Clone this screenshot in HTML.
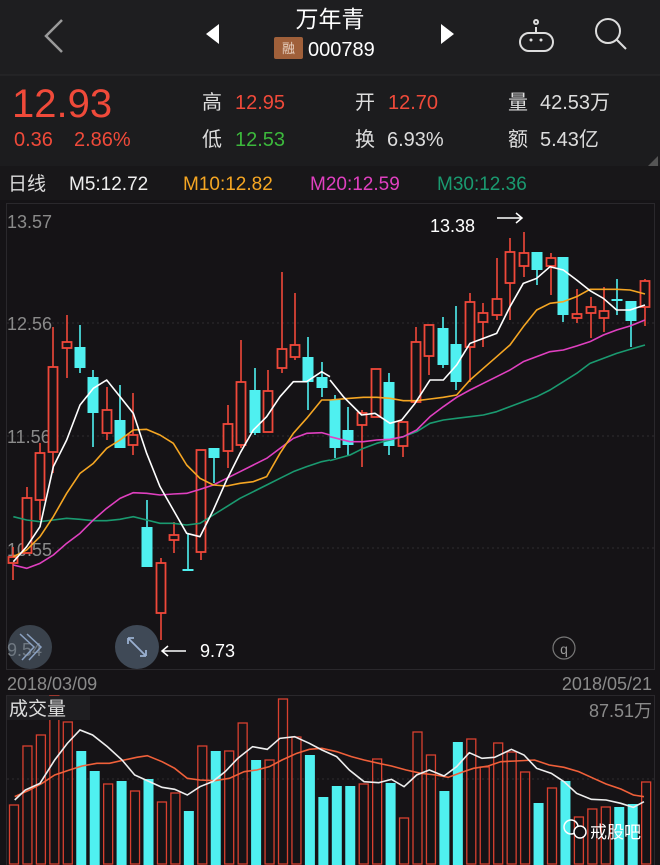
<!DOCTYPE html>
<html><head><meta charset="utf-8"><style>
body{margin:0;width:660px;height:865px;background:#151316;overflow:hidden;font-family:"Liberation Sans","Noto Sans CJK SC",sans-serif;}
svg{display:block}
</style></head><body>
<svg width="660" height="865" xmlns="http://www.w3.org/2000/svg" font-family="Liberation Sans, Noto Sans CJK SC, sans-serif">
<rect x="0" y="0" width="660" height="200" fill="#1c1c1e"/>
<rect x="0" y="0" width="660" height="75" fill="#1e1e20"/>
<line x1="0" y1="75" x2="660" y2="75" stroke="#2a2a2c"/>
<rect x="0" y="166" width="660" height="34" fill="#181719"/>
<!-- header -->
<path d="M62 20 L46 36 L62 52" fill="none" stroke="#9a9a9a" stroke-width="2.5"/>
<path d="M219 24 L206 34 L219 44Z" fill="#fff"/>
<path d="M441 24 L454 34 L441 44Z" fill="#fff"/>
<text x="330" y="27" font-size="23" fill="#fff" text-anchor="middle">万年青</text>
<rect x="274" y="37" width="29" height="22" rx="2" fill="#a0603a"/>
<text x="288.5" y="53" font-size="13" fill="#e8d0c0" text-anchor="middle">融</text>
<text x="308" y="56" font-size="20" fill="#fff">000789</text>
<g fill="none" stroke="#ddd" stroke-width="2"><rect x="520" y="33" width="33" height="18" rx="9"/><path d="M536 33 V27 M536 24 a2 2 0 1 1 0.1 0"/></g>
<circle cx="531" cy="40" r="1.5" fill="#ddd"/><circle cx="541" cy="40" r="1.5" fill="#ddd"/>
<circle cx="608" cy="31" r="12" fill="none" stroke="#ddd" stroke-width="2"/><path d="M617 40 L626 49" stroke="#ddd" stroke-width="2"/>
<!-- info -->
<text x="12" y="117" font-size="40" fill="#f04a3a">12.93</text>
<text x="14" y="146" font-size="20" fill="#f04a3a">0.36</text>
<text x="74" y="146" font-size="20" fill="#f04a3a">2.86%</text>
<g font-size="20"><text x="202" y="109" fill="#ddd">高</text><text x="235" y="109" fill="#f04a3a">12.95</text>
<text x="202" y="146" fill="#ddd">低</text><text x="235" y="146" fill="#3cb83c">12.53</text>
<text x="355" y="109" fill="#ddd">开</text><text x="388" y="109" fill="#f04a3a">12.70</text>
<text x="355" y="146" fill="#ddd">换</text><text x="387" y="146" fill="#ddd">6.93%</text>
<text x="508" y="109" fill="#ddd">量</text><text x="540" y="109" fill="#ddd">42.53万</text>
<text x="508" y="146" fill="#ddd">额</text><text x="540" y="146" fill="#ddd">5.43亿</text></g>
<path d="M658 156 L648 166 L658 166Z" fill="#555"/>
<g font-size="19"><text x="8" y="190" fill="#ddd">日线</text><text x="69" y="190" fill="#eee">M5:12.72</text>
<text x="183" y="190" fill="#f5a623">M10:12.82</text><text x="310" y="190" fill="#e040c0">M20:12.59</text><text x="437" y="190" fill="#1a9a70">M30:12.36</text></g>
<!-- chart frame -->
<rect x="6.5" y="203.5" width="648" height="466" fill="none" stroke="#2a282c"/>
<g stroke="#2e2c30" stroke-dasharray="2 3"><line x1="7" y1="323" x2="654" y2="323"/><line x1="7" y1="436" x2="654" y2="436"/><line x1="7" y1="548" x2="654" y2="548"/></g>
<g font-size="18" fill="#8a8a8a"><text x="7" y="228">13.57</text><text x="7" y="330">12.56</text><text x="7" y="443">11.56</text><text x="7" y="556">10.55</text><text x="7" y="656">9.54</text></g>
<!-- candles -->
<g stroke-width="2" id="c"></g>
<g fill="none" stroke-width="1.6" stroke-linejoin="round">
<g transform="translate(0,200) scale(0.33333)">
<polyline vector-effect="non-scaling-stroke" stroke="#1a9a70" points="40,950 80,960 120,965 160,960 200,955 240,958 280,962 320,962 360,958 400,950 440,960 480,970 520,970 560,975 600,970 640,945 680,920 720,895 760,875 800,855 840,835 880,815 920,800 965,785 990,780"/>
<polyline vector-effect="non-scaling-stroke" stroke="#e040c0" points="40,1095 80,1105 120,1090 160,1065 200,1030 240,1000 280,960 320,925 360,895 400,878 440,880 480,885 520,882 560,880 600,868 640,855 680,835 720,815 760,795 800,775 840,745 880,715 920,700 965,698 990,705"/>
<polyline vector-effect="non-scaling-stroke" stroke="#f5a623" points="40,1070 80,1050 120,1010 160,950 200,880 240,820 280,790 320,745 360,720 400,690 440,688 480,705 520,730 560,795 600,835 640,855 680,858 720,850 760,845 800,830 840,760 880,700 920,655 965,600 990,600"/>
<polyline vector-effect="non-scaling-stroke" stroke="#fff" points="40,1085 80,1040 120,980 160,800 200,720 240,615 280,565 320,540 360,590 400,640 440,760 480,860 520,930 560,1000 600,1010 640,930 680,840 720,760 760,690 800,650 840,590 880,545 920,545 965,515 990,530"/>
</g>
<g transform="translate(330,200) scale(0.33333)">
<polyline vector-effect="non-scaling-stroke" stroke="#1a9a70" points="0,782 60,765 100,745 140,730 180,720 220,710 260,695 300,670 340,660 380,655 420,650 460,645 500,635 540,620 580,605 620,590 660,570 700,545 740,520 780,490 820,475 860,460 900,448 945,435"/>
<polyline vector-effect="non-scaling-stroke" stroke="#e040c0" points="0,710 60,725 100,725 140,720 180,718 220,710 260,690 300,650 340,620 380,592 420,570 460,550 500,530 540,510 580,485 620,470 660,455 700,450 740,438 780,425 820,405 860,390 900,378 945,360"/>
<polyline vector-effect="non-scaling-stroke" stroke="#f5a623" points="0,600 60,595 100,592 140,592 180,595 220,602 260,602 300,597 340,592 380,585 420,540 460,505 500,470 540,435 580,380 620,330 660,310 700,305 740,290 780,268 820,268 860,268 900,270 945,282"/>
<polyline vector-effect="non-scaling-stroke" stroke="#fff" points="0,540 40,590 95,645 135,640 180,670 215,660 255,610 300,540 340,540 380,495 420,430 460,415 500,400 540,320 580,250 620,235 660,200 700,210 740,240 780,272 820,295 860,330 900,330 945,315"/>
</g></g>
<text x="430" y="232" font-size="18" fill="#fff">13.38</text>
<path d="M497 218 H522 M516 213 L522 218 L516 223" fill="none" stroke="#fff" stroke-width="1.5"/>
<text x="200" y="657" font-size="18" fill="#fff">9.73</text>
<path d="M186 651 H162 M168 646 L162 651 L168 656" fill="none" stroke="#fff" stroke-width="1.5"/>
<circle cx="30" cy="647" r="22" fill="#5a6a7a" opacity="0.55"/>
<path d="M20 634 L34 647 L22 660 M27 634 L41 647 L29 660" fill="none" stroke="#8aa0c0" stroke-width="1.5"/>
<circle cx="137" cy="647" r="22" fill="#4a5866" opacity="0.8"/>
<path d="M128 638 L146 656 M128 638 v6 M128 638 h6 M146 656 v-6 M146 656 h-6" fill="none" stroke="#9ab0d0" stroke-width="1.8"/>
<circle cx="564" cy="648" r="11" fill="none" stroke="#777" stroke-width="1.2"/>
<text x="564" y="654" font-size="14" fill="#999" text-anchor="middle">q</text>
<!-- dates -->
<text x="7" y="690" font-size="18" fill="#8a8a8a">2018/03/09</text>
<text x="652" y="690" font-size="18" fill="#8a8a8a" text-anchor="end">2018/05/21</text>
<rect x="6.5" y="695.5" width="648" height="175" fill="none" stroke="#2a282c"/>
<line x1="7" y1="779" x2="654" y2="779" stroke="#2e2c30" stroke-dasharray="2 3"/>
<g id="v"></g>
<g fill="none" stroke-width="1.6" transform="translate(0,660) scale(0.42088,0.33333)">
<polyline vector-effect="non-scaling-stroke" stroke="#f0603a" points="35,410 70,390 100,370 130,345 165,330 195,318 230,310 260,310 295,300 325,292 350,287 385,305 415,325 445,355 475,360 510,362 545,355 580,335 610,330 640,320 670,300 705,280 735,268 765,265 800,275 835,290 865,300 900,310 930,318 965,330 1000,340 1035,345 1065,352 1095,338 1125,325 1160,318 1190,305 1225,303 1270,300 1305,315 1340,322 1375,335 1410,355 1440,372 1475,387 1505,405 1530,410"/>
<polyline vector-effect="non-scaling-stroke" stroke="#eee" points="35,420 60,390 95,370 130,300 160,250 190,210 220,225 255,260 290,300 320,345 355,365 385,382 415,388 445,405 475,380 505,365 535,335 565,295 600,260 635,268 665,235 700,230 735,250 765,270 800,290 830,330 865,365 900,368 930,358 960,380 990,345 1020,330 1055,348 1085,320 1115,278 1145,295 1175,292 1215,268 1245,285 1275,325 1310,340 1340,365 1370,400 1405,418 1440,420 1475,430 1505,442 1530,425"/>
</g>
<rect x="7" y="696" width="83" height="24" fill="#1e1d20"/>
<text x="9" y="715" font-size="19" fill="#ddd">成交量</text>
<text x="652" y="717" font-size="18" fill="#8a8a8a" text-anchor="end">87.51万</text>
<g fill="#fff"><circle cx="571" cy="827" r="7" fill="none" stroke="#fff" stroke-width="1.5"/><circle cx="580" cy="832" r="6" fill="#151316" stroke="#fff" stroke-width="1.5"/></g>
<text x="590" y="838" font-size="17" fill="#fff">戒股吧</text>
</svg>
<script>
var C=[[13,'r',557,563,547,580],[27,'r',498,553,487,553],[40,'r',453,500,443,520],[53,'r',367,452,327,473],[67,'r',342,348,315,378],[80,'c',347,368,325,373],[93,'c',377,413,370,447],[107,'r',410,433,387,440],[120,'c',420,448,385,448],[133,'r',435,445,393,455],[147,'c',527,567,500,567],[161,'r',563,613,558,640],[174,'r',535,540,522,553],[188,'c',569,571,533,571],[201,'r',450,552,450,560],[214,'c',448,458,448,483],[228,'r',424,451,405,468],[241,'r',382,445,340,448],[255,'c',390,433,368,435],[268,'r',391,432,370,432],[282,'r',349,368,272,373],[295,'r',345,357,293,360],[308,'c',357,382,337,410],[322,'c',377,388,362,397],[335,'c',400,448,395,458],[348,'c',430,445,407,455],[362,'r',413,425,410,467],[376,'r',369,417,369,417],[389,'c',382,446,373,455],[403,'r',422,446,422,457],[416,'r',342,402,327,402],[429,'r',325,356,325,375],[443,'c',328,365,317,368],[456,'c',344,382,306,390],[470,'r',302,347,293,382],[483,'r',313,322,303,347],[497,'r',299,315,258,320],[510,'r',252,283,238,320],[524,'r',253,266,232,277],[537,'c',252,270,252,285],[551,'r',258,266,253,295],[563,'c',257,315,257,322],[577,'r',314,318,289,323],[591,'r',307,313,297,338],[604,'r',311,318,287,332],[617,'c',299,301,279,315],[631,'c',301,321,301,347],[645,'r',281,307,279,326]];
var s='';C.forEach(function(c){var col=c[1]=='r'?'#f0483a':'#4ff0f0';s+='<line x1="'+c[0]+'" x2="'+c[0]+'" y1="'+c[4]+'" y2="'+c[5]+'" stroke="'+col+'" stroke-width="1.6"/>';
if(c[1]=='r')s+='<rect x="'+(c[0]-4.5)+'" y="'+c[2]+'" width="9" height="'+Math.max(c[3]-c[2],1)+'" fill="#151316" stroke="'+col+'" stroke-width="1.8"/>';else s+='<rect x="'+(c[0]-5.5)+'" y="'+c[2]+'" width="11" height="'+Math.max(c[3]-c[2],2)+'" fill="'+col+'"/>';});
document.getElementById('c').innerHTML=s;
var V=['r805','r746','r735','r696','r722','c751','c771','r784','c781','r791','c779','r802','r793','c811','r746','c751','r751','r723','c760','r760','r699','r737','c755','c797','c786','c786','r784','r759','c783','r818','r732','r755','c791','c742','r739','r767','r743','r752','r772','c803','r788','c781','r817','r809','r807','c807','c804','r782'];
var t='';V.forEach(function(v,i){var x=9+i*13.45,y=+v.slice(1);if(v[0]=='r')t+='<rect x="'+(x+0.5)+'" y="'+y+'" width="9" height="'+(864-y)+'" fill="none" stroke="#d8402f" stroke-width="1.3"/>';else t+='<rect x="'+x+'" y="'+y+'" width="10" height="'+(865-y)+'" fill="#4ff0f0"/>';});
document.getElementById('v').innerHTML=t;
</script>
</body></html>
